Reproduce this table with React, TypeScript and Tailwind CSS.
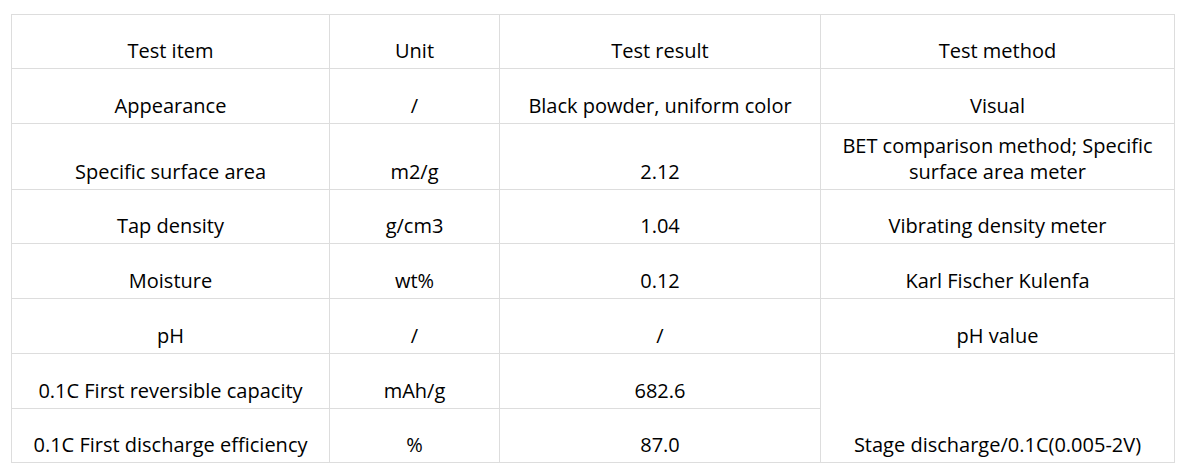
const rows: { cells: string[]; h: string }[] = [
  { cells: ['Test item', 'Unit', 'Test result', 'Test method'], h: 'h-[54px]' },
  { cells: ['Appearance', '/', 'Black powder, uniform color', 'Visual'], h: 'h-[55px]' },
  {
    cells: ['Specific surface area', 'm2/g', '2.12', 'BET comparison method; Specific surface area meter'],
    h: 'h-[66px]',
  },
  { cells: ['Tap density', 'g/cm3', '1.04', 'Vibrating density meter'], h: 'h-[54px]' },
  { cells: ['Moisture', 'wt%', '0.12', 'Karl Fischer Kulenfa'], h: 'h-[55px]' },
  { cells: ['pH', '/', '/', 'pH value'], h: 'h-[55px]' },
]

const cell = 'border border-[#dddddd] px-2 pb-[4px] align-bottom text-center leading-[26px]'

export default function App() {
  return (
    <div className="min-h-screen bg-white pl-[11px] pt-[14px] font-['Open_Sans',sans-serif] text-[20px] text-black">
      <table className="w-[1163px] table-fixed border-collapse">
        <colgroup>
          <col className="w-[318px]" />
          <col className="w-[170px]" />
          <col className="w-[321px]" />
          <col className="w-[354px]" />
        </colgroup>
        <tbody>
          {rows.map((r, i) => (
            <tr key={i} className={r.h}>
              {r.cells.map((c, j) => (
                <td key={j} className={cell}>
                  {c}
                </td>
              ))}
            </tr>
          ))}
          <tr className="h-[55px]">
            <td className={cell}>0.1C First reversible capacity</td>
            <td className={cell}>mAh/g</td>
            <td className={cell}>682.6</td>
            <td rowSpan={2} className={cell}>
              Stage discharge/0.1C(0.005-2V)
            </td>
          </tr>
          <tr className="h-[54px]">
            <td className={cell}>0.1C First discharge efficiency</td>
            <td className={cell}>%</td>
            <td className={cell}>87.0</td>
          </tr>
        </tbody>
      </table>
    </div>
  )
}
